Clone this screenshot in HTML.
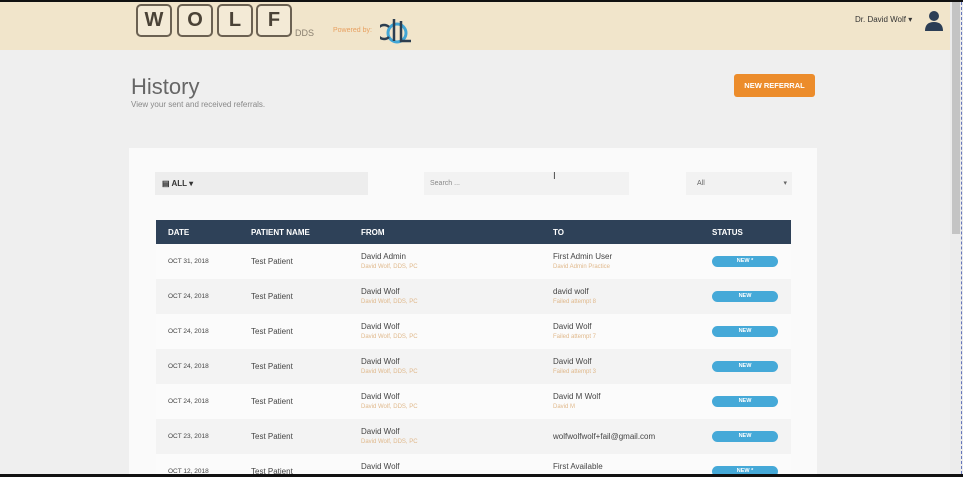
<!DOCTYPE html>
<html style="overflow:hidden;width:963px;height:477px"><head><style>
*{margin:0;padding:0;box-sizing:border-box}
body{width:963px;height:477px;overflow:hidden;background:#efefef;font-family:"Liberation Sans",sans-serif;position:relative}
.top{position:absolute;left:0;top:0;width:963px;height:2px;background:#111}
.hdr{position:absolute;left:0;top:2px;width:950px;height:48px;background:#f1e5cb}
.tile{position:absolute;top:4px;width:36px;height:33px;border:2px solid #6b6152;border-radius:5px;background:#f3ead6;font:bold 20px "Liberation Sans",sans-serif;color:#4a4236;text-align:center;line-height:29px}
.abs{position:absolute}
.card{position:absolute;left:129px;top:148px;width:688px;height:326px;background:#fafafa}
.th{position:absolute;left:156px;top:220px;width:635px;height:24px;background:#2e4158;color:#fff;font-size:8px;font-weight:bold}
.th span{position:absolute;top:8px}
.row{position:absolute;left:156px;width:635px;height:35px;font-size:8px;color:#444;overflow:hidden}
.row span{position:absolute}
.sub{font-size:6px;color:#e0b98c}
.pill{position:absolute;left:556px;top:12px;width:66px;height:11px;border-radius:6px;background:#45a9d8;color:#fff;font-size:5.5px;font-weight:bold;text-align:center;line-height:11px}
</style></head><body>
<div class="top"></div>
<div class="hdr"></div>
<div class="tile" style="left:136px">W</div>
<div class="tile" style="left:177px">O</div>
<div class="tile" style="left:217px">L</div>
<div class="tile" style="left:256px">F</div>
<div class="abs" style="left:295px;top:28px;font-size:9px;color:#8a8070">DDS</div>
<div class="abs" style="left:333px;top:27px;font-size:7px;color:#e8a060">Powered by:</div>
<svg class="abs" style="left:380px;top:15px" width="34" height="32"><circle cx="17" cy="18" r="9" fill="none" stroke="#41a6d6" stroke-width="3"/><path d="M9 12a7 7 0 1 0 0 10M14 4v22M21 6v20h10" fill="none" stroke="#2c3e50" stroke-width="2.5"/></svg>
<div class="abs" style="left:855px;top:15px;font-size:8px;color:#333">Dr. David Wolf ▾</div>
<svg class="abs" style="left:925px;top:10px" width="18" height="22"><circle cx="9" cy="6" r="5" fill="#2c3e55"/><path d="M0 21q0-9 9-9t9 9z" fill="#2c3e55"/></svg>
<div class="abs" style="left:950px;top:2px;width:13px;height:472px;background:#ececec"></div>
<div class="abs" style="left:952px;top:2px;width:8px;height:232px;background:#c4c4c4"></div>
<div class="abs" style="left:961px;top:2px;width:1px;height:472px;border-left:1px dashed #6677bb"></div>
<div class="abs" style="left:131px;top:74px;font-size:22px;color:#666">History</div>
<div class="abs" style="left:131px;top:100px;font-size:8px;color:#888">View your sent and received referrals.</div>
<div class="abs" style="left:734px;top:74px;width:81px;height:23px;background:#ec8c2b;border-radius:3px;color:#fff;font-size:7.5px;font-weight:bold;text-align:center;line-height:23px">NEW REFERRAL</div>
<div class="card"></div>
<div class="abs" style="left:155px;top:172px;width:213px;height:23px;background:#ededed;font-size:8px;font-weight:bold;color:#333;padding:7px 7px">&#9636; ALL ▾</div>
<div class="abs" style="left:424px;top:172px;width:205px;height:23px;background:#f2f2f2;font-size:7px;color:#888;padding:8px 6px">Search ...</div>
<div class="abs" style="left:553px;top:171px;font-size:10px;color:#444">I</div>
<div class="abs" style="left:686px;top:172px;width:106px;height:23px;background:#f2f2f2;font-size:7px;color:#666;padding:8px 11px">All<span style="position:absolute;right:5px;top:7px">▾</span></div>
<div class="th"><span style="left:12px">DATE</span><span style="left:95px">PATIENT NAME</span><span style="left:205px">FROM</span><span style="left:397px">TO</span><span style="left:556px">STATUS</span></div>

<div class="row" style="top:244px;background:#fbfbfb"><span style="left:12px;top:14px;font-size:6.5px">OCT 31, 2018</span><span style="left:95px;top:13px">Test Patient</span><span style="left:205px;top:8px">David Admin</span><span class="sub" style="left:205px;top:20px">David Wolf, DDS, PC</span><span style="left:397px;top:8px">First Admin User</span><span class="sub" style="left:397px;top:20px">David Admin Practice</span><div class="pill">NEW *</div></div>
<div class="row" style="top:279px;background:#f3f3f3"><span style="left:12px;top:14px;font-size:6.5px">OCT 24, 2018</span><span style="left:95px;top:13px">Test Patient</span><span style="left:205px;top:8px">David Wolf</span><span class="sub" style="left:205px;top:20px">David Wolf, DDS, PC</span><span style="left:397px;top:8px">david wolf</span><span class="sub" style="left:397px;top:20px">Failed attempt 8</span><div class="pill">NEW</div></div>
<div class="row" style="top:314px;background:#fbfbfb"><span style="left:12px;top:14px;font-size:6.5px">OCT 24, 2018</span><span style="left:95px;top:13px">Test Patient</span><span style="left:205px;top:8px">David Wolf</span><span class="sub" style="left:205px;top:20px">David Wolf, DDS, PC</span><span style="left:397px;top:8px">David Wolf</span><span class="sub" style="left:397px;top:20px">Failed attempt 7</span><div class="pill">NEW</div></div>
<div class="row" style="top:349px;background:#f3f3f3"><span style="left:12px;top:14px;font-size:6.5px">OCT 24, 2018</span><span style="left:95px;top:13px">Test Patient</span><span style="left:205px;top:8px">David Wolf</span><span class="sub" style="left:205px;top:20px">David Wolf, DDS, PC</span><span style="left:397px;top:8px">David Wolf</span><span class="sub" style="left:397px;top:20px">Failed attempt 3</span><div class="pill">NEW</div></div>
<div class="row" style="top:384px;background:#fbfbfb"><span style="left:12px;top:14px;font-size:6.5px">OCT 24, 2018</span><span style="left:95px;top:13px">Test Patient</span><span style="left:205px;top:8px">David Wolf</span><span class="sub" style="left:205px;top:20px">David Wolf, DDS, PC</span><span style="left:397px;top:8px">David M Wolf</span><span class="sub" style="left:397px;top:20px">David M</span><div class="pill">NEW</div></div>
<div class="row" style="top:419px;background:#f3f3f3"><span style="left:12px;top:14px;font-size:6.5px">OCT 23, 2018</span><span style="left:95px;top:13px">Test Patient</span><span style="left:205px;top:8px">David Wolf</span><span class="sub" style="left:205px;top:20px">David Wolf, DDS, PC</span><span style="left:397px;top:13px">wolfwolfwolf+fail@gmail.com</span><div class="pill">NEW</div></div>
<div class="row" style="top:454px;height:20px;background:#fbfbfb"><span style="left:12px;top:14px;font-size:6.5px">OCT 12, 2018</span><span style="left:95px;top:13px">Test Patient</span><span style="left:205px;top:8px">David Wolf</span><span style="left:397px;top:8px">First Available</span><div class="pill">NEW *</div></div>
<div class="abs" style="left:0;top:474px;width:963px;height:3px;background:#111"></div>
</body></html>
